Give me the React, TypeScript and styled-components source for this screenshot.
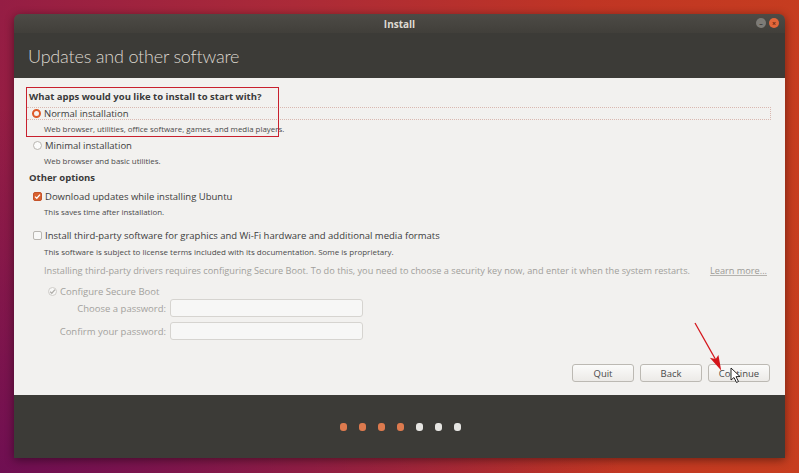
import * as React from "react";
import styled, { createGlobalStyle } from "styled-components";

const GlobalStyle = createGlobalStyle`
  html, body {
    margin: 0;
    padding: 0;
    width: 799px;
    height: 473px;
    overflow: hidden;
  }
  body {
    font-family: "Open Sans", "DejaVu Sans", sans-serif;
    background:
      radial-gradient(ellipse at 0% 100%, #6f0f52 0%, rgba(111, 15, 82, 0) 55%),
      linear-gradient(95deg, #951d44 0%, #ab2a38 35%, #c03524 70%, #c73e1f 100%);
  }
`;

const Desktop = styled.div`
  position: relative;
  width: 799px;
  height: 473px;
  padding: 14px 0 0 14px;
  box-sizing: border-box;
`;

const Window = styled.div`
  width: 771px;
  height: 444px;
  display: flex;
  flex-direction: column;
  border-radius: 6px 6px 0 0;
  overflow: hidden;
  box-shadow: 0 2px 10px rgba(0, 0, 0, 0.45);
`;

const TitleBar = styled.div`
  position: relative;
  height: 19px;
  flex: none;
  display: flex;
  align-items: center;
  justify-content: center;
  background: linear-gradient(#4d4b46, #413f3a);
  color: #dfdbd2;
  font-size: 10px;
  font-weight: 700;
`;

const WinButtons = styled.div`
  position: absolute;
  right: 6px;
  top: 4px;
  display: flex;
  gap: 3px;
`;

const WinButton = styled.div<{ $close?: boolean }>`
  width: 10px;
  height: 10px;
  border-radius: 50%;
  background: ${(p) => (p.$close ? "#e2663a" : "#7d7b76")};
  display: flex;
  align-items: center;
  justify-content: center;
  color: ${(p) => (p.$close ? "#6b2a14" : "#3d3c38")};
  font-size: 7px;
  line-height: 1;
`;

const Header = styled.div`
  height: 45px;
  flex: none;
  background: #3c3b37;
  display: flex;
  align-items: center;
  padding-left: 14px;
  color: #dcd8cf;
  font-family: "Lato", "Open Sans", sans-serif;
  font-size: 18px;
  font-weight: 300;
  letter-spacing: -0.2px;
`;

const Content = styled.div`
  height: 317px;
  flex: none;
  background: #f2f1ef;
  box-sizing: border-box;
  padding: 13px 14px 0 13px;
  display: flex;
  flex-direction: column;
  color: #3c3c3c;
  font-size: 9.5px;
  white-space: nowrap;
`;

const Heading = styled.div<{ $mt?: number }>`
  height: 12px;
  line-height: 12px;
  margin-top: ${(p) => p.$mt ?? 0}px;
  padding-left: 2px;
  font-weight: 700;
  color: #3a3a3a;
`;

const OptionRow = styled.div<{ $mt: number; $focus?: boolean; $dim?: boolean; $indent?: number }>`
  height: 13px;
  margin-top: ${(p) => p.$mt}px;
  display: flex;
  align-items: center;
  gap: 3px;
  padding-left: ${(p) => p.$indent ?? 5}px;
  box-sizing: border-box;
  color: ${(p) => (p.$dim ? "#a3a19d" : "#3c3c3c")};
  border: 1px dotted ${(p) => (p.$focus ? "#d9b8b0" : "transparent")};
  border-left-style: ${(p) => (p.$focus ? "none" : "dotted")};
`;

const Radio = styled.span<{ $on?: boolean }>`
  width: 9px;
  height: 9px;
  border-radius: 50%;
  box-sizing: border-box;
  flex: none;
  background: ${(p) => (p.$on ? "#f6f3f1" : "#fbfbfa")};
  border: ${(p) => (p.$on ? "2.5px solid #de5a2a" : "1px solid #b9b6b1")};
`;

const Check = styled.span<{ $on?: boolean; $dim?: boolean }>`
  width: 9px;
  height: 9px;
  box-sizing: border-box;
  flex: none;
  display: flex;
  align-items: center;
  justify-content: center;
  background: ${(p) => (p.$on && !p.$dim ? "#d9612f" : "#f8f8f7")};
  border: 1px solid ${(p) => (p.$on && !p.$dim ? "#c4532a" : p.$dim ? "#cfcdc9" : "#b9b6b1")};
  border-radius: ${(p) => (p.$dim ? "50%" : "2px")};
  svg {
    display: block;
  }
`;

const Desc = styled.div<{ $mt: number; $size?: number }>`
  height: 10px;
  line-height: 10px;
  margin-top: ${(p) => p.$mt}px;
  padding-left: 17px;
  font-size: ${(p) => p.$size ?? 7.9}px;
  color: #4a4a4a;
`;

const Note = styled.div<{ $mt: number }>`
  height: 12px;
  line-height: 12px;
  margin-top: ${(p) => p.$mt}px;
  padding-left: 17px;
  display: flex;
  justify-content: space-between;
  color: #a19f9b;
  font-size: 9.2px;
  padding-right: 4px;
`;

const LearnMore = styled.span`
  text-decoration: underline;
  text-decoration-color: #b5b3af;
  color: #9c9a96;
`;

const PassRow = styled.div<{ $mt: number }>`
  margin-top: ${(p) => p.$mt}px;
  height: 18px;
  display: grid;
  grid-template-columns: 139px 193px;
  column-gap: 4px;
  align-items: center;
  color: #a3a19d;
`;

const PassLabel = styled.span`
  text-align: right;
`;

const PassInput = styled.div`
  height: 18px;
  box-sizing: border-box;
  border: 1px solid #d6d4d0;
  border-radius: 3px;
  background: #f7f7f6;
`;

const ButtonBar = styled.div`
  margin-top: 24px;
  display: flex;
  justify-content: flex-end;
  gap: 6px;
  padding-right: 1px;
`;

const Button = styled.div`
  width: 62px;
  height: 18px;
  box-sizing: border-box;
  border: 1px solid #bcb9b3;
  border-radius: 3px;
  background: linear-gradient(#fbfbfa, #eceae7);
  display: flex;
  align-items: center;
  justify-content: center;
  font-size: 9.5px;
  color: #4a4a4a;
`;

const Footer = styled.div`
  flex: 1;
  background: #3c3b37;
  display: flex;
  align-items: center;
  justify-content: center;
  gap: 12px;
  padding-left: 1px;
`;

const Dot = styled.span<{ $done?: boolean }>`
  width: 7px;
  height: 8px;
  border-radius: 3px;
  background: ${(p) => (p.$done ? "#dd7a4e" : "#e6e5e2")};
`;

const Highlight = styled.div`
  position: absolute;
  left: 26px;
  top: 87px;
  width: 253px;
  height: 50px;
  box-sizing: border-box;
  border: 1.5px solid #c8202e;
  pointer-events: none;
`;

const Overlay = styled.svg`
  position: absolute;
  left: 0;
  top: 0;
  pointer-events: none;
`;

const Tick = ({ color }: { color: string }) => (
  <svg width="7" height="7" viewBox="0 0 7 7">
    <path d="M1 3.6 L2.8 5.3 L6 1.6" fill="none" stroke={color} strokeWidth="1.3" />
  </svg>
);

export default function App() {
  const dots = [true, true, true, true, false, false, false];
  return (
    <Desktop>
      <GlobalStyle />
      <Window>
        <TitleBar>
          Install
          <WinButtons>
            <WinButton>–</WinButton>
            <WinButton $close>×</WinButton>
          </WinButtons>
        </TitleBar>
        <Header>Updates and other software</Header>
        <Content>
          <Heading>What apps would you like to install to start with?</Heading>
          <OptionRow $mt={4} $focus>
            <Radio $on />
            Normal installation
          </OptionRow>
          <Desc $mt={4}>Web browser, utilities, office software, games, and media players.</Desc>
          <OptionRow $mt={5}>
            <Radio />
            Minimal installation
          </OptionRow>
          <Desc $mt={4}>Web browser and basic utilities.</Desc>
          <Heading $mt={6}>Other options</Heading>
          <OptionRow $mt={6}>
            <Check $on>
              <Tick color="#ffffff" />
            </Check>
            Download updates while installing Ubuntu
          </OptionRow>
          <Desc $mt={4}>This saves time after installation.</Desc>
          <OptionRow $mt={12}>
            <Check />
            Install third-party software for graphics and Wi-Fi hardware and additional media formats
          </OptionRow>
          <Desc $mt={5} $size={8}>
            This software is subject to license terms included with its documentation. Some is proprietary.
          </Desc>
          <Note $mt={8}>
            <span>
              Installing third-party drivers requires configuring Secure Boot. To do this, you need to choose a
              security key now, and enter it when the system restarts.
            </span>
            <LearnMore>Learn more...</LearnMore>
          </Note>
          <OptionRow $mt={8} $dim $indent={20}>
            <Check $on $dim>
              <Tick color="#b0aeaa" />
            </Check>
            Configure Secure Boot
          </OptionRow>
          <PassRow $mt={1}>
            <PassLabel>Choose a password:</PassLabel>
            <PassInput />
          </PassRow>
          <PassRow $mt={5}>
            <PassLabel>Confirm your password:</PassLabel>
            <PassInput />
          </PassRow>
          <ButtonBar>
            <Button>Quit</Button>
            <Button>Back</Button>
            <Button>Continue</Button>
          </ButtonBar>
        </Content>
        <Footer>
          {dots.map((d, i) => (
            <Dot key={i} $done={d} />
          ))}
        </Footer>
      </Window>
      <Highlight />
      <Overlay width="799" height="473" viewBox="0 0 799 473">
        <line x1="695" y1="323" x2="717" y2="362" stroke="#d4161c" strokeWidth="1.3" />
        <path d="M720 368 L712 359 L716 360 L718 357 Z" fill="#d4161c" stroke="#d4161c" strokeWidth="1.5" />
        <path
          d="M731 368 L731 380 L734 377.5 L736.5 382.5 L738.5 381.5 L736 376.7 L740 376.5 Z"
          fill="#ffffff"
          stroke="#111111"
          strokeWidth="0.9"
          strokeLinejoin="round"
        />
      </Overlay>
    </Desktop>
  );
}
